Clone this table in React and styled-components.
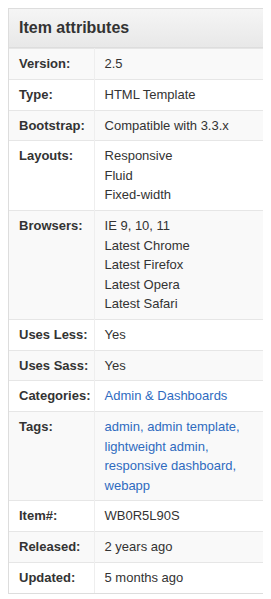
import React from "react";
import styled, { createGlobalStyle } from "styled-components";

const attributes = [
  { label: "Version:", values: ["2.5"] },
  { label: "Type:", values: ["HTML Template"] },
  { label: "Bootstrap:", values: ["Compatible with 3.3.x"] },
  { label: "Layouts:", values: ["Responsive", "Fluid", "Fixed-width"] },
  {
    label: "Browsers:",
    values: ["IE 9, 10, 11", "Latest Chrome", "Latest Firefox", "Latest Opera", "Latest Safari"],
  },
  { label: "Uses Less:", values: ["Yes"] },
  { label: "Uses Sass:", values: ["Yes"] },
  { label: "Categories:", values: ["Admin & Dashboards"], link: true },
  {
    label: "Tags:",
    values: ["admin, admin template,", "lightweight admin,", "responsive dashboard,", "webapp"],
    link: true,
  },
  { label: "Item#:", values: ["WB0R5L90S"] },
  { label: "Released:", values: ["2 years ago"] },
  { label: "Updated:", values: ["5 months ago"] },
];

function App() {
  return (
    <>
      <GlobalStyle />
      <Panel>
        <Heading>Item attributes</Heading>
        <Table>
          <tbody>
            {attributes.map((item, i) => (
              <Row key={i} $striped={i % 2 === 0}>
                <Label>{item.label}</Label>
                <Value>
                  {item.values.map((v, j) => (
                    <Line key={j} $link={item.link}>{v}</Line>
                  ))}
                </Value>
              </Row>
            ))}
          </tbody>
        </Table>
      </Panel>
    </>
  );
}

export default App;

const GlobalStyle = createGlobalStyle`
  body {
    margin: 8px;
    background: #fff;
    font-family: "Liberation Sans", Arial, sans-serif;
    color: #333;
  }
`;

const Panel = styled.div`
  width: 255px;
  border: 1px solid #ddd;
  background: #fff;
`;

const Heading = styled.h3`
  margin: 0;
  height: 38px;
  line-height: 38px;
  padding: 0 10px;
  font-size: 16px;
  font-weight: bold;
  color: #333;
  background: linear-gradient(to bottom, #f5f5f5 0%, #e8e8e8 100%);
  border-bottom: 1px solid #ddd;
`;

const Table = styled.table`
  width: 100%;
  border-collapse: collapse;
  font-size: 13px;
`;

const Row = styled.tr`
  background: ${(p) => (p.$striped ? "#f9f9f9" : "#fff")};
  td {
    border-top: 1px solid #e6e6e6;
  }
`;

const Label = styled.td`
  width: 65px;
  padding: 5px 3px 5.25px 10px;
  vertical-align: top;
  font-weight: bold;
  white-space: nowrap;
  line-height: 19.5px;
  border-right: 1px solid #eee;
`;

const Value = styled.td`
  padding: 5px 9px 5.25px 10px;
  vertical-align: top;
  line-height: 19.5px;
`;

const Line = styled.div`
  color: ${(p) => (p.$link ? "#2f6bbf" : "#333")};
`;
